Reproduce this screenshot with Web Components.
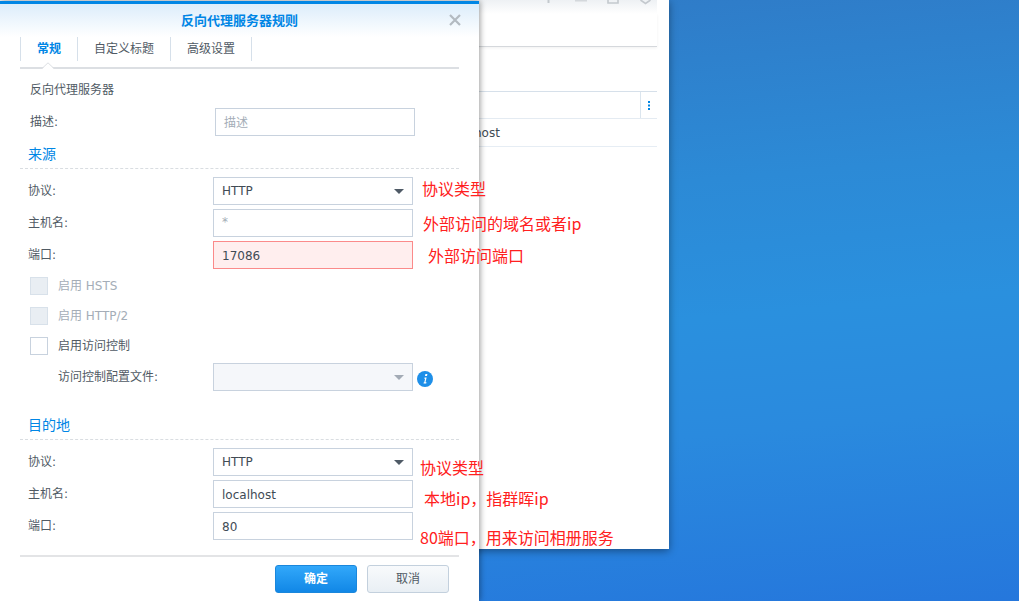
<!DOCTYPE html>
<html>
<head>
<meta charset="utf-8">
<title>反向代理服务器规则</title>
<style>
  html, body { margin: 0; height: 100%; overflow: hidden; }
  body { font: 12px "DejaVu Sans", "Noto Sans CJK SC", sans-serif; color: #414b55; }
</style>
</head>
<body>
<nas-desktop>
  <back-window></back-window>
  <proxy-dialog>
    <dlg-tabs slot="tabs"></dlg-tabs>

    <plain-row label="反向代理服务器"></plain-row>
    <form-row label="描述:" value="描述" kind="placeholder" short></form-row>

    <section-head style="--head-top: 7px">来源</section-head>
    <form-row label="协议:" value="HTTP" kind="select"></form-row>
    <form-row label="主机名:" value="*" kind="placeholder"></form-row>
    <form-row label="端口:" value="17086" kind="error"></form-row>
    <check-row label="启用 HSTS" disabled style="margin-top: 8px"></check-row>
    <check-row label="启用 HTTP/2" disabled style="margin-top: 12px"></check-row>
    <check-row label="启用访问控制" style="margin-top: 12px"></check-row>
    <form-row label="访问控制配置文件:" value="" kind="select-disabled" indent info style="margin-top: 8px"></form-row>

    <section-head style="--head-top: 23px">目的地</section-head>
    <form-row label="协议:" value="HTTP" kind="select"></form-row>
    <form-row label="主机名:" value="localhost" kind="text"></form-row>
    <form-row label="端口:" value="80" kind="text"></form-row>

    <dlg-button slot="footer" primary>确定</dlg-button>
    <dlg-button slot="footer">取消</dlg-button>
  </proxy-dialog>

  <red-note x="422" y="177">协议类型</red-note>
  <red-note x="423" y="212">外部访问的域名或者ip</red-note>
  <red-note x="428" y="244">外部访问端口</red-note>
  <red-note x="420" y="456">协议类型</red-note>
  <red-note x="424" y="487">本地ip，指群晖ip</red-note>
  <red-note x="420" y="526">80端口，用来访问相册服务</red-note>
</nas-desktop>

<script>
const FONT = `"DejaVu Sans", "Noto Sans CJK SC", sans-serif`;

class NasDesktop extends HTMLElement {
  constructor() {
    super();
    this.attachShadow({ mode: "open" });
    this.shadowRoot.innerHTML = `
    <style>
      :host {
        display: block;
        position: relative;
        width: 1019px;
        height: 601px;
        overflow: hidden;
        background: linear-gradient(175deg, #3078c4 0%, #2c8ad6 35%, #2a90de 55%, #2a8ade 72%, #2577dc 100%);
      }
    </style>
    <slot></slot>
    `;
  }
}

class BackWindow extends HTMLElement {
  constructor() {
    super();
    this.attachShadow({ mode: "open" });
    this.shadowRoot.innerHTML = `
    <style>
      :host {
        position: absolute;
        left: 0;
        top: 0;
        width: 669px;
        height: 549px;
        background: #fff;
        box-shadow: 0 2px 8px rgba(0, 0, 0, .4);
        box-sizing: border-box;
        padding-right: 12px;
      }
      .titlebar {
        height: 14px;
        background: linear-gradient(#eef1f4, #fff);
        position: relative;
      }
      .titlebar svg { position: absolute; top: 0; display: block; }
      .toolbar {
        height: 32px;
        border-bottom: 1px solid #d5d8dc;
        box-shadow: 0 1px 3px rgba(0, 0, 0, .06);
      }
      .thead {
        margin-top: 44px;
        height: 26px;
        border-top: 1px solid #d6e0ea;
        border-bottom: 1px solid #e4ebf2;
        display: flex;
        justify-content: flex-end;
      }
      .more {
        width: 16px;
        border-left: 1px solid #dbe5ee;
        display: flex;
        align-items: center;
        justify-content: center;
      }
      .row {
        height: 27px;
        border-bottom: 1px solid #e6edf4;
        display: flex;
        align-items: center;
        padding-left: 446px;
        font: 12px ${FONT};
        color: #414b55;
      }
    </style>
    <div class="titlebar">
      <svg style="left: 547px" width="3" height="4" viewBox="0 0 3 4"><rect x="0.5" y="0" width="2" height="3" fill="#c4c9ce"/></svg>
      <svg style="left: 575px" width="13" height="3" viewBox="0 0 13 3"><rect x="0" y="0" width="12" height="1.5" fill="#d4d8dc"/></svg>
      <svg style="left: 607px" width="12" height="5" viewBox="0 0 12 5"><path d="M1 0v3h10V0" fill="none" stroke="#c4c9ce" stroke-width="1.6"/></svg>
      <svg style="left: 639px" width="13" height="5" viewBox="0 0 13 5"><path d="M1.5 0l5 3.5 5-3.5" fill="none" stroke="#c4c9ce" stroke-width="1.6"/></svg>
    </div>
    <div class="toolbar"></div>
    <div class="thead">
      <div class="more">
        <svg width="3" height="9" viewBox="0 0 3 9"><path d="M0 0h2v2H0zM0 3.5h2v2H0zM0 7h2v2H0z" fill="#0086e5"/></svg>
      </div>
    </div>
    <div class="row"><span>localhost</span></div>
    `;
  }
}

class ProxyDialog extends HTMLElement {
  constructor() {
    super();
    this.attachShadow({ mode: "open" });
    this.shadowRoot.innerHTML = `
    <style>
      :host {
        position: absolute;
        left: 0;
        top: 1px;
        width: 479px;
        height: 600px;
        background: #fff;
        box-shadow: 1px 0 6px rgba(0, 0, 0, .4);
        display: flex;
        flex-direction: column;
        border-top: 3px solid #0086e5;
        box-sizing: border-box;
      }
      .title {
        height: 33px;
        flex: none;
        display: flex;
        align-items: center;
        justify-content: center;
        position: relative;
        box-sizing: border-box;
        padding-bottom: 2px;
        background: linear-gradient(#dcedfb, #fff);
        color: #0086e5;
        font: bold 13px ${FONT};
      }
      .close {
        position: absolute;
        right: 17px;
        top: 9px;
        display: block;
      }
      .body {
        flex: 1;
        padding: 0 20px;
        min-height: 0;
      }
      .foot {
        flex: none;
        height: 46px;
        margin: 0 20px;
        border-top: 2px solid #e3e4e6;
        box-sizing: border-box;
        display: flex;
        justify-content: flex-end;
        gap: 10px;
        padding: 8px 10px 0 0;
      }
    </style>
    <div class="title">反向代理服务器规则
      <svg class="close" width="14" height="14" viewBox="0 0 14 14"><path d="M2 2l10 10M12 2L2 12" stroke="#b3bac1" stroke-width="2.2" fill="none"/></svg>
    </div>
    <div class="body">
      <slot name="tabs"></slot>
      <slot></slot>
    </div>
    <div class="foot"><slot name="footer"></slot></div>
    `;
  }
}

class DlgTabs extends HTMLElement {
  constructor() {
    super();
    this.attachShadow({ mode: "open" });
    this.shadowRoot.innerHTML = `
    <style>
      :host {
        display: flex;
        height: 30px;
        position: relative;
        border-bottom: 2px solid #dcdfe3;
        box-sizing: content-box;
        font: 12px ${FONT};
      }
      .tab {
        height: 24px;
        display: flex;
        align-items: center;
        justify-content: center;
        box-sizing: border-box;
        padding-bottom: 4px;
        border-right: 1px solid #d6e0ea;
        color: #505a64;
      }
      .tab.first { border-left: 1px solid #d6e0ea; width: 58px; color: #0086e5; font-weight: bold; }
      .tab.two { width: 93px; }
      .tab.three { width: 81px; }
      .arrow {
        position: absolute;
        left: 22px;
        bottom: -2px;
      }
    </style>
    <div class="tab first">常规</div>
    <div class="tab two">自定义标题</div>
    <div class="tab three">高级设置</div>
    <svg class="arrow" width="12" height="7" viewBox="0 0 12 7"><path d="M0 7L6 1l6 6z" fill="#fff"/><path d="M0 6.5L6 .8l6 5.7" fill="none" stroke="#dcdfe3"/></svg>
    `;
  }
}

class PlainRow extends HTMLElement {
  constructor() {
    super();
    this.attachShadow({ mode: "open" });
    this.shadowRoot.innerHTML = `
    <style>
      :host {
        display: flex;
        align-items: center;
        height: 39px;
        padding-left: 10px;
        font: 12px ${FONT};
        color: #505a64;
      }
    </style>
    <span></span>
    `;
  }
  connectedCallback() {
    this.shadowRoot.querySelector("span").textContent = this.getAttribute("label");
  }
}

class SectionHead extends HTMLElement {
  constructor() {
    super();
    this.attachShadow({ mode: "open" });
    this.shadowRoot.innerHTML = `
    <style>
      :host {
        display: block;
        margin-top: var(--head-top, 0);
        margin-bottom: 8px;
        height: 26px;
        box-sizing: border-box;
        border-bottom: 1px dashed #d9dde1;
        padding-left: 8px;
        color: #0086e5;
        font: 14px/22px ${FONT};
      }
    </style>
    <slot></slot>
    `;
  }
}

class FormRow extends HTMLElement {
  constructor() {
    super();
    this.attachShadow({ mode: "open" });
    this.shadowRoot.innerHTML = `
    <style>
      :host {
        display: flex;
        align-items: center;
        height: 28px;
        margin-bottom: 4px;
        font: 12px ${FONT};
        color: #505a64;
      }
      .label { width: 193px; box-sizing: content-box; padding-bottom: 3px; flex: none; text-indent: 8px; }
      :host([short]) .label { width: 195px; text-indent: 10px; }
      :host([indent]) .label { text-indent: 38px; }
      .box {
        width: 200px;
        height: 28px;
        box-sizing: border-box;
        border: 1px solid #c8d2de;
        display: flex;
        align-items: center;
        justify-content: space-between;
        padding: 0 8px;
        background: #fff;
        color: #414b55;
        flex: none;
      }
      .box.placeholder { color: #a4adb7; padding-bottom: 2px; }
      .box.text { padding-top: 1px; }
      .box.error { background: #ffeeee; border-color: #fb8a8a; padding-top: 1px; }
      .box.select-disabled { background: #f5f7fa; }
      .caret { width: 0; height: 0; border: 5px solid transparent; border-top: 5px solid #4f5a66; border-bottom: 0; }
      .box.select-disabled .caret { border-top-color: #a3abb5; }
      .info { margin: 4px 0 0 4px; display: block; }
    </style>
    <span class="label"></span>
    <div class="box"><span class="val"></span></div>
    `;
  }
  connectedCallback() {
    const kind = this.getAttribute("kind") || "";
    const box = this.shadowRoot.querySelector(".box");
    this.shadowRoot.querySelector(".label").textContent = this.getAttribute("label");
    this.shadowRoot.querySelector(".val").textContent = this.getAttribute("value");
    if (kind) box.classList.add(kind);
    if (kind.startsWith("select")) {
      box.insertAdjacentHTML("beforeend", `<i class="caret"></i>`);
    }
    if (this.hasAttribute("info")) {
      box.insertAdjacentHTML("afterend", `
        <svg class="info" width="16" height="16" viewBox="0 0 16 16">
          <circle cx="8" cy="8" r="8" fill="#1e8fe8"/>
          <path d="M8.4 3h2l-.4 1.9H8zM7.6 6.4h2L8.5 11.2h1l-.3 1.3H6.5l.3-1.3h.5l.8-3.5h-.8z" fill="#fff"/>
        </svg>`);
    }
  }
}

class CheckRow extends HTMLElement {
  constructor() {
    super();
    this.attachShadow({ mode: "open" });
    this.shadowRoot.innerHTML = `
    <style>
      :host {
        display: flex;
        align-items: center;
        gap: 10px;
        height: 18px;
        padding-left: 10px;
        font: 12px ${FONT};
        color: #505a64;
      }
      span { padding-bottom: 3px; }
      .check {
        width: 18px;
        height: 18px;
        box-sizing: border-box;
        border: 1px solid #c8d2de;
        background: #fff;
      }
      :host([disabled]) { color: #a4adb7; }
      :host([disabled]) .check { background: #e9eef3; border-color: #d8e1ea; }
    </style>
    <div class="check"></div>
    <span></span>
    `;
  }
  connectedCallback() {
    this.shadowRoot.querySelector("span").textContent = this.getAttribute("label");
  }
}

class DlgButton extends HTMLElement {
  constructor() {
    super();
    this.attachShadow({ mode: "open" });
    this.shadowRoot.innerHTML = `
    <style>
      :host {
        display: flex;
        align-items: center;
        justify-content: center;
        width: 82px;
        height: 28px;
        box-sizing: border-box;
        padding-bottom: 3px;
        border-radius: 3px;
        border: 1px solid #c3d0dd;
        background: linear-gradient(#f8fafc, #e9eff4);
        color: #505a64;
        font: 12px ${FONT};
      }
      :host([primary]) {
        border-color: #1a87dc;
        background: linear-gradient(#32a8fa, #1187e6);
        color: #fff;
        font-weight: bold;
      }
    </style>
    <slot></slot>
    `;
  }
}

class RedNote extends HTMLElement {
  constructor() {
    super();
    this.attachShadow({ mode: "open" });
    this.shadowRoot.innerHTML = `
    <style>
      :host {
        position: absolute;
        white-space: nowrap;
        color: #ff2020;
        font: 16px/22px "Noto Sans CJK SC", "Noto Sans", sans-serif;
      }
    </style>
    <slot></slot>
    `;
  }
  connectedCallback() {
    this.style.left = this.getAttribute("x") + "px";
    this.style.top = this.getAttribute("y") + "px";
  }
}

customElements.define("nas-desktop", NasDesktop);
customElements.define("back-window", BackWindow);
customElements.define("proxy-dialog", ProxyDialog);
customElements.define("dlg-tabs", DlgTabs);
customElements.define("plain-row", PlainRow);
customElements.define("section-head", SectionHead);
customElements.define("form-row", FormRow);
customElements.define("check-row", CheckRow);
customElements.define("dlg-button", DlgButton);
customElements.define("red-note", RedNote);
</script>
</body>
</html>
